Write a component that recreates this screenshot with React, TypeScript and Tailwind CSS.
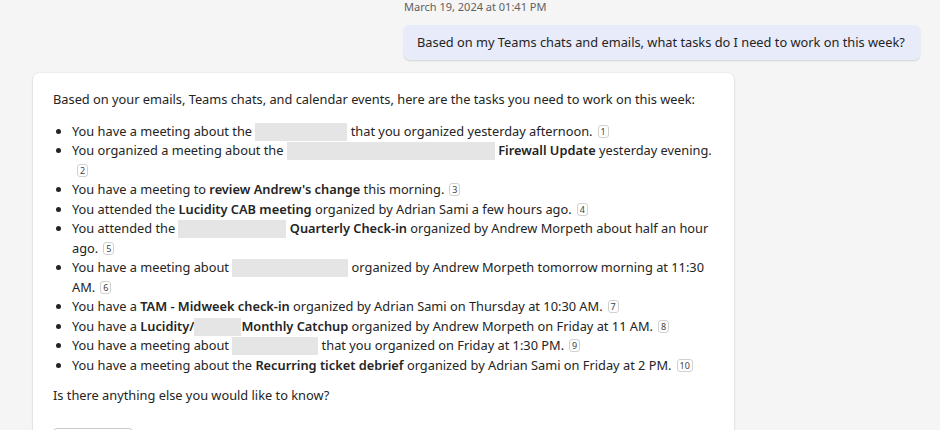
import React from 'react'

const Cite = ({ n }: { n: number }) => (
  <span className="ml-[5px] inline-flex h-[13px] min-w-[11px] items-center justify-center rounded-[3px] border border-[#d1d1d1] bg-white px-[2px] align-top translate-y-[3px] text-[9px] leading-none text-[#424242]">
    {n}
  </span>
)

const Blur = ({ w }: { w: number }) => (
  <span
    className="inline-block h-[18px] translate-y-[1px] bg-[#e5e5e5] align-top blur-[0.6px]"
    style={{ width: w }}
  />
)

const B = ({ children }: { children: React.ReactNode }) => (
  <span className="font-semibold">{children}</span>
)

export default function App() {
  const items: React.ReactNode[] = [
    <>
      You have a meeting about the <Blur w={92} /> that you organized yesterday afternoon.
      <Cite n={1} />
    </>,
    <>
      You organized a meeting about the <Blur w={208} /> <B>Firewall Update</B> yesterday evening.{' '}
      <Cite n={2} />
    </>,
    <>
      You have a meeting to <B>review Andrew's change</B> this morning.
      <Cite n={3} />
    </>,
    <>
      You attended the <B>Lucidity CAB meeting</B> organized by Adrian Sami a few hours ago.
      <Cite n={4} />
    </>,
    <>
      You attended the <Blur w={108} /> <B>Quarterly Check-in</B> organized by Andrew Morpeth about half an hour ago.
      <Cite n={5} />
    </>,
    <>
      You have a meeting about <Blur w={116} /> organized by Andrew Morpeth tomorrow morning at 11:30 AM.
      <Cite n={6} />
    </>,
    <>
      You have a <B>TAM - Midweek check-in</B> organized by Adrian Sami on Thursday at 10:30 AM.
      <Cite n={7} />
    </>,
    <>
      You have a <B>Lucidity/</B>
      <Blur w={47} />
      <B>Monthly Catchup</B> organized by Andrew Morpeth on Friday at 11 AM.
      <Cite n={8} />
    </>,
    <>
      You have a meeting about <Blur w={86} /> that you organized on Friday at 1:30 PM.
      <Cite n={9} />
    </>,
    <>
      You have a meeting about the <B>Recurring ticket debrief</B> organized by Adrian Sami on Friday at 2 PM.
      <Cite n={10} />
    </>,
  ]

  return (
    <div className="h-[430px] w-[940px] overflow-hidden bg-[#f5f5f5] font-['Segoe_UI','Noto_Sans',sans-serif] text-[#242424]">
      <div className="flex flex-col items-end pr-[20px]">
        <div className="w-[516px] text-[11px] leading-[13px] text-[#616161]">
          March 19, 2024 at 01:41 PM
        </div>
        <div className="mt-[12px] w-[516px] whitespace-nowrap rounded-[6px] bg-[#e8ebfa] px-[13px] py-[8px] text-[12.8px] leading-[19px] shadow-[0_1px_2px_rgba(0,0,0,0.14)]">
          Based on my Teams chats and emails, what tasks do I need to work on this week?
        </div>
      </div>
      <div className="ml-[33px] mt-[13px] w-[701px] rounded-[6px] bg-white pl-[20px] pr-[16px] pt-[17px] pb-[20px] text-[12.8px] leading-[19.5px] shadow-[0_1px_2px_rgba(0,0,0,0.14),0_0_2px_rgba(0,0,0,0.12)]">
        <p>
          Based on your emails, Teams chats, and calendar events, here are the tasks you need to work on this week:
        </p>
        <ul className="mt-[12px] list-disc pl-[19px]">
          {items.map((it, i) => (
            <li key={i}>{it}</li>
          ))}
        </ul>
        <p className="mt-[11px]">Is there anything else you would like to know?</p>
        <div className="mt-[22px] h-[24px] w-[80px] rounded-[4px] border border-[#c8c8c8]" />
      </div>
    </div>
  )
}
